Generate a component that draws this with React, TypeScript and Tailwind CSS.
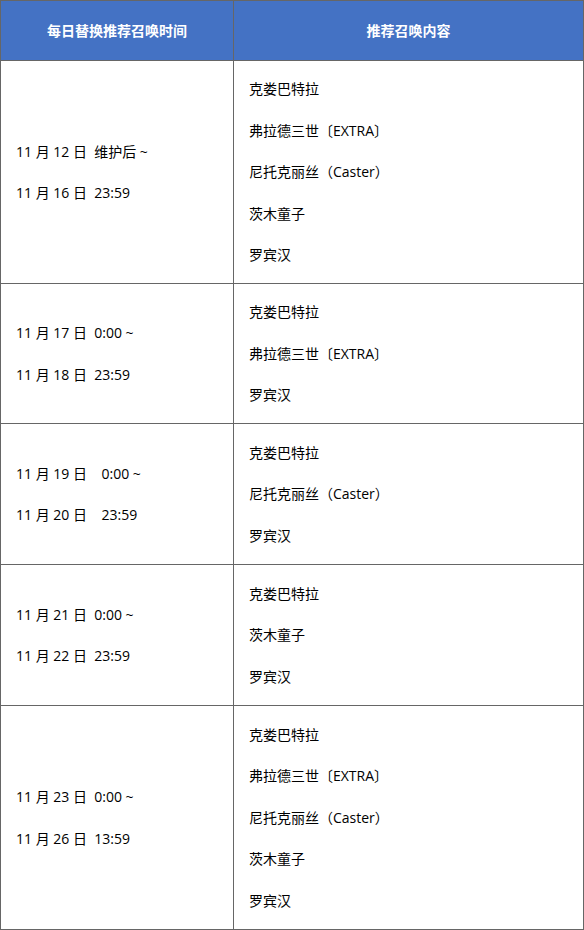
const rows = [
  {
    h: "h-[223px]",
    times: ["11 月 12 日  维护后 ~", "11 月 16 日  23:59"],
    items: ["克娄巴特拉", "弗拉德三世〔EXTRA〕", "尼托克丽丝（Caster）", "茨木童子", "罗宾汉"],
  },
  {
    h: "h-[140px]",
    times: ["11 月 17 日  0:00 ~", "11 月 18 日  23:59"],
    items: ["克娄巴特拉", "弗拉德三世〔EXTRA〕", "罗宾汉"],
  },
  {
    h: "h-[141px]",
    times: ["11 月 19 日    0:00 ~", "11 月 20 日    23:59"],
    items: ["克娄巴特拉", "尼托克丽丝（Caster）", "罗宾汉"],
  },
  {
    h: "h-[141px]",
    times: ["11 月 21 日  0:00 ~", "11 月 22 日  23:59"],
    items: ["克娄巴特拉", "茨木童子", "罗宾汉"],
  },
  {
    h: "h-[224px]",
    times: ["11 月 23 日  0:00 ~", "11 月 26 日  13:59"],
    items: ["克娄巴特拉", "弗拉德三世〔EXTRA〕", "尼托克丽丝（Caster）", "茨木童子", "罗宾汉"],
  },
];

const App = () => {
  return (
    <div className="w-[584px] bg-white font-['Open_Sans','Noto_Sans_CJK_SC',sans-serif] text-[14px] text-black">
      <table className="w-full table-fixed border-collapse border border-[#666]">
        <colgroup>
          <col className="w-[233px]" />
          <col />
        </colgroup>
        <thead>
          <tr className="h-[60px] bg-[#4472c4] text-white">
            <th className="border border-[#666] font-bold">每日替换推荐召唤时间</th>
            <th className="border border-[#666] font-bold">推荐召唤内容</th>
          </tr>
        </thead>
        <tbody>
          {rows.map((row, i) => (
            <tr key={i} className={row.h}>
              <td className="border border-[#666] pl-[15px] pr-4 py-[7px] align-middle">
                {row.times.map((t) => (
                  <p key={t} className="py-[10px] whitespace-pre leading-[21.5px]">
                    {t}
                  </p>
                ))}
              </td>
              <td className="border border-[#666] pl-[15px] pr-4 py-[7px] align-middle">
                {row.items.map((item, j) => (
                  <p key={j} className="py-[10px] leading-[21.5px]">
                    {item}
                  </p>
                ))}
              </td>
            </tr>
          ))}
        </tbody>
      </table>
    </div>
  );
};

export default App;
